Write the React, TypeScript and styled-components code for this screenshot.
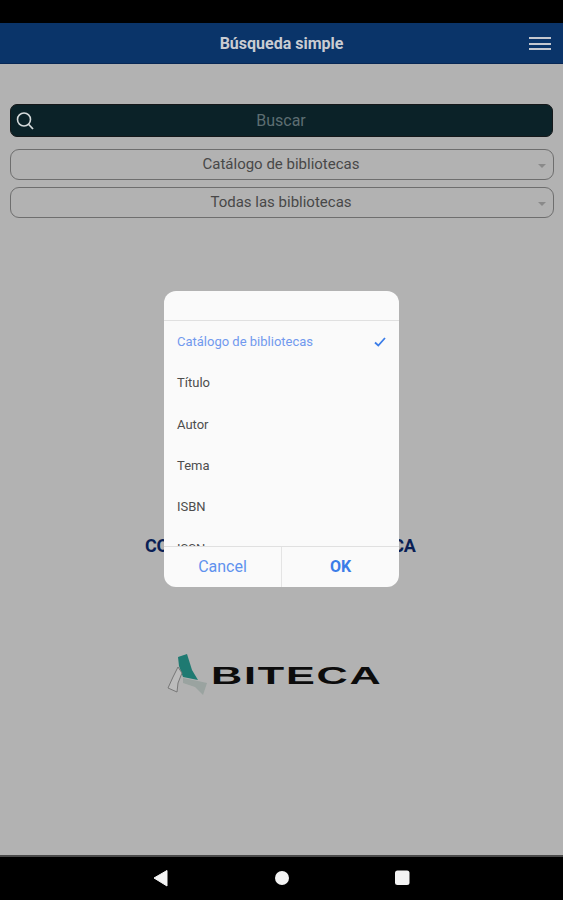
import React from "react";
import styled, { createGlobalStyle } from "styled-components";

const Global = createGlobalStyle`
  html, body { margin: 0; padding: 0; background: #000; }
  * { box-sizing: border-box; }
  body { font-family: Roboto, "Liberation Sans", sans-serif; }
`;

const Screen = styled.div`
  position: relative;
  width: 563px;
  height: 900px;
  display: flex;
  flex-direction: column;
  background: #b2b2b2;
  overflow: hidden;
`;
const StatusBar = styled.div`
  height: 23px;
  background: #000;
  flex: none;
`;
const Header = styled.header`
  height: 41px;
  flex: none;
  background: #0a3469;
  border-bottom: 1px solid #072755;
  display: flex;
  align-items: center;
  justify-content: center;
  position: relative;
  color: #c9ccd2;
  font-size: 16px;
  font-weight: 700;
`;
const Burger = styled.div`
  position: absolute;
  right: 12px;
  top: 14px;
  width: 22px;
  height: 13px;
  display: flex;
  flex-direction: column;
  justify-content: space-between;
  & > i {
    display: block;
    height: 2px;
    background: #c4c8d0;
  }
`;
const Main = styled.main`
  flex: 1;
  display: flex;
  flex-direction: column;
  align-items: flex-start;
  padding: 40px 0 0 10px;
`;
const SearchBar = styled.div`
  width: 543px;
  height: 33px;
  border-radius: 7px;
  background: #0b2228;
  border: 1px solid #15181a;
  position: relative;
  display: flex;
  align-items: center;
  justify-content: center;
  color: #5d6e72;
  font-size: 16px;
  padding-right: 1px;
`;
const SearchIcon = styled.svg`
  position: absolute;
  left: 3px;
  top: 5px;
`;
const SelectBox = styled.div<{ $top: number }>`
  width: 544px;
  height: 31px;
  margin-top: ${(p) => p.$top}px;
  border: 1px solid #6e6e6e;
  border-radius: 9px;
  position: relative;
  display: flex;
  align-items: center;
  justify-content: center;
  color: #484848;
  font-size: 15px;
  padding-right: 2px;
  padding-bottom: 1px;
  &::after {
    content: "";
    position: absolute;
    right: 7px;
    top: 14px;
    border-left: 4px solid transparent;
    border-right: 4px solid transparent;
    border-top: 4px solid #8a8a8a;
  }
`;
const Title = styled.div`
  margin-top: 317px;
  margin-left: 135px;
  color: #0a1f55;
  font-size: 18px;
  font-weight: 700;
  letter-spacing: -0.2px;
  white-space: nowrap;
  line-height: 22px;
`;
const Logo = styled.div`
  margin-top: 97px;
  margin-left: 156px;
  height: 42px;
  display: flex;
  align-items: center;
  gap: 1px;
`;
const Wordmark = styled.span`
  display: inline-block;
  color: #0c0c0c;
  font-family: "Liberation Sans", sans-serif;
  font-size: 24px;
  font-weight: 700;
  letter-spacing: 1px;
  transform: scaleX(1.8);
  transform-origin: left center;
  line-height: 20px;
  margin-top: 2px;
`;
const NavBar = styled.nav`
  height: 45px;
  flex: none;
  background: #000;
  border-top: 2px solid #4a4a4a;
  display: flex;
  align-items: center;
  justify-content: center;
`;
const NavIcons = styled.svg`
  display: block;
`;
const Dialog = styled.div`
  position: absolute;
  left: 164px;
  top: 291px;
  width: 235px;
  height: 296px;
  border-radius: 12px;
  background: #fafafa;
  display: flex;
  flex-direction: column;
  overflow: hidden;
`;
const DialogHead = styled.div`
  height: 30px;
  flex: none;
  border-bottom: 1px solid #e0e0e0;
`;
const OptionList = styled.div`
  flex: 1;
  overflow: hidden;
`;
const Option = styled.div<{ $active?: boolean }>`
  height: 41.3px;
  padding: 0 13px;
  display: flex;
  align-items: center;
  justify-content: space-between;
  font-size: 13px;
  color: ${(p) => (p.$active ? "#7199ee" : "#4d4d4d")};
`;
const DialogFoot = styled.div`
  height: 41px;
  flex: none;
  border-top: 1px solid #e0e0e0;
  display: flex;
`;
const DialogBtn = styled.div<{ $strong?: boolean }>`
  flex: 1;
  display: flex;
  align-items: center;
  justify-content: center;
  font-size: 16px;
  padding-bottom: 2px;
  color: ${(p) => (p.$strong ? "#3b7de8" : "#5f92ee")};
  font-weight: ${(p) => (p.$strong ? 700 : 400)};
  & + & {
    border-left: 1px solid #e4e4e4;
  }
`;

export default function App() {
  return (
    <Screen>
      <Global />
      <StatusBar />
      <Header>
        Búsqueda simple
        <Burger>
          <i />
          <i />
          <i />
        </Burger>
      </Header>
      <Main>
        <SearchBar>
          <SearchIcon width="22" height="22" viewBox="0 0 22 22" fill="none">
            <circle cx="10" cy="9.5" r="6.5" stroke="#d5dadb" strokeWidth="1.6" />
            <path d="M14.8 14.5 L19 19" stroke="#d5dadb" strokeWidth="1.8" />
          </SearchIcon>
          Buscar
        </SearchBar>
        <SelectBox $top={12}>Catálogo de bibliotecas</SelectBox>
        <SelectBox $top={7}>Todas las bibliotecas</SelectBox>
        <Title>CONSULTA EN LÍNEA BIBLIOTECA</Title>
        <Logo>
          <svg width="44" height="42" viewBox="0 0 44 42" fill="none">
            <path d="M12 3 L21 0 L26 16 L32 26 L17 23 L13 12 Z" fill="#1f7a72" />
            <path d="M17 24 L32 27 L41 29 L37 41 L29 33 L17 29 Z" fill="#9aa3a0" />
            <path d="M12 13 L16 19 L12 29 L11 38 L2 34 L7 23 Z" fill="#bcbcbc" stroke="#777" strokeWidth="1" />
          </svg>
          <Wordmark>BITECA</Wordmark>
        </Logo>
      </Main>
      <NavBar>
        <NavIcons width="320" height="43" viewBox="0 0 320 43">
          <path d="M32 21 L45 13.5 V29 Z" fill="#f4f4f4" stroke="#f4f4f4" strokeLinejoin="round" />
          <circle cx="160" cy="21" r="7" fill="#f4f4f4" />
          <rect x="273" y="13.5" width="14.5" height="14.5" rx="2.5" fill="#f4f4f4" />
        </NavIcons>
      </NavBar>
      <Dialog>
        <DialogHead />
        <OptionList>
          <Option $active>
            Catálogo de bibliotecas
            <svg width="12" height="10" viewBox="0 0 12 10" fill="none">
              <path d="M1 5.5 L4.3 8.5 L11 1" stroke="#3b7de8" strokeWidth="1.8" />
            </svg>
          </Option>
          <Option>Título</Option>
          <Option>Autor</Option>
          <Option>Tema</Option>
          <Option>ISBN</Option>
          <Option>ISSN</Option>
        </OptionList>
        <DialogFoot>
          <DialogBtn>Cancel</DialogBtn>
          <DialogBtn $strong>OK</DialogBtn>
        </DialogFoot>
      </Dialog>
    </Screen>
  );
}
